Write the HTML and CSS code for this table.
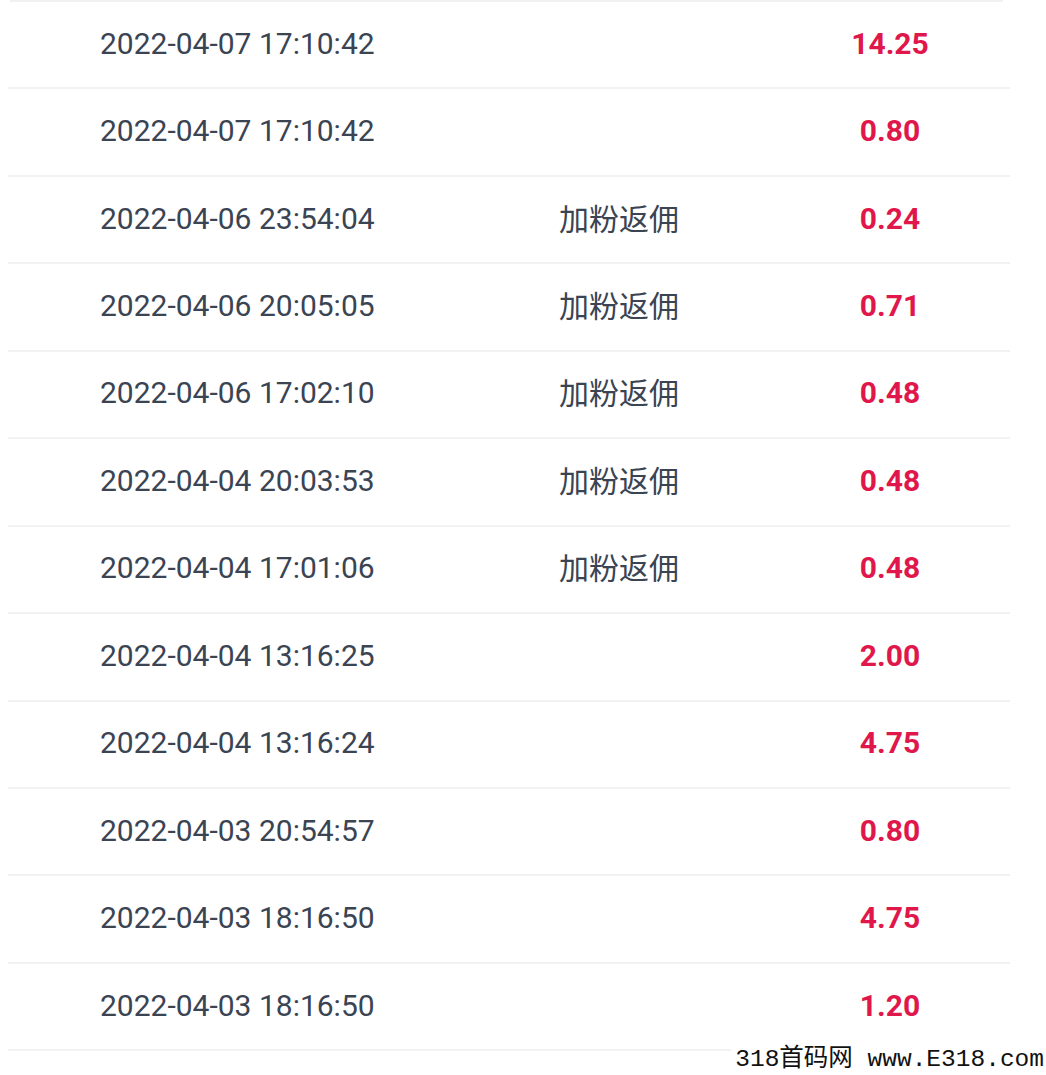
FILE: index.html
```html
<!DOCTYPE html>
<html lang="zh-CN">
<head>
<meta charset="utf-8">
<link rel="stylesheet" href="styles.css">
</head>
<body>
<div class="page">
  <div class="topline"></div>
  <ul class="list">
    <li class="row"><span class="date">2022-04-07 17:10:42</span><span class="type"></span><span class="amount">14.25</span></li>
    <li class="row"><span class="date">2022-04-07 17:10:42</span><span class="type"></span><span class="amount">0.80</span></li>
    <li class="row"><span class="date">2022-04-06 23:54:04</span><span class="type">加粉返佣</span><span class="amount">0.24</span></li>
    <li class="row"><span class="date">2022-04-06 20:05:05</span><span class="type">加粉返佣</span><span class="amount">0.71</span></li>
    <li class="row"><span class="date">2022-04-06 17:02:10</span><span class="type">加粉返佣</span><span class="amount">0.48</span></li>
    <li class="row"><span class="date">2022-04-04 20:03:53</span><span class="type">加粉返佣</span><span class="amount">0.48</span></li>
    <li class="row"><span class="date">2022-04-04 17:01:06</span><span class="type">加粉返佣</span><span class="amount">0.48</span></li>
    <li class="row"><span class="date">2022-04-04 13:16:25</span><span class="type"></span><span class="amount">2.00</span></li>
    <li class="row"><span class="date">2022-04-04 13:16:24</span><span class="type"></span><span class="amount">4.75</span></li>
    <li class="row"><span class="date">2022-04-03 20:54:57</span><span class="type"></span><span class="amount">0.80</span></li>
    <li class="row"><span class="date">2022-04-03 18:16:50</span><span class="type"></span><span class="amount">4.75</span></li>
    <li class="row"><span class="date">2022-04-03 18:16:50</span><span class="type"></span><span class="amount">1.20</span></li>
  </ul>
  <div class="watermark">318首码网 www.E318.com</div>
</div>
</body>
</html>
```
FILE: styles.css
```css
html, body {
  margin: 0;
  padding: 0;
  background: #ffffff;
}
.page {
  position: relative;
  width: 1046px;
  height: 1075px;
  overflow: hidden;
  font-family: Roboto, "Noto Sans CJK SC", sans-serif;
}
.topline {
  height: 2px;
  margin: 0 43px 0 10px;
  background: #f1f1f1;
}
.list {
  list-style: none;
  margin: 0 36px 0 8px;
  padding: 0;
}
.row {
  box-sizing: border-box;
  height: 87.45px;
  border-bottom: 2px solid #f2f2f2;
  display: grid;
  grid-template-columns: 459px 230px 202px;
  align-items: center;
  padding: 0 0 3px 92px;
  font-size: 30px;
}
.date {
  color: #3a4452;
  white-space: nowrap;
}
.type {
  color: #3a4452;
  font-family: "Noto Sans CJK SC", sans-serif;
  font-size: 30px;
  line-height: 36px;
  margin-bottom: 3px;
  white-space: nowrap;
}
.amount {
  color: #e0174b;
  font-weight: 700;
  text-align: center;
}
.watermark {
  position: absolute;
  right: 2px;
  bottom: 1px;
  font-family: "Liberation Mono", "Noto Sans CJK SC", monospace;
  font-size: 24.5px;
  line-height: 28px;
  color: #111111;
  white-space: nowrap;
  background: #ffffff;
  padding-left: 4px;
}
```
